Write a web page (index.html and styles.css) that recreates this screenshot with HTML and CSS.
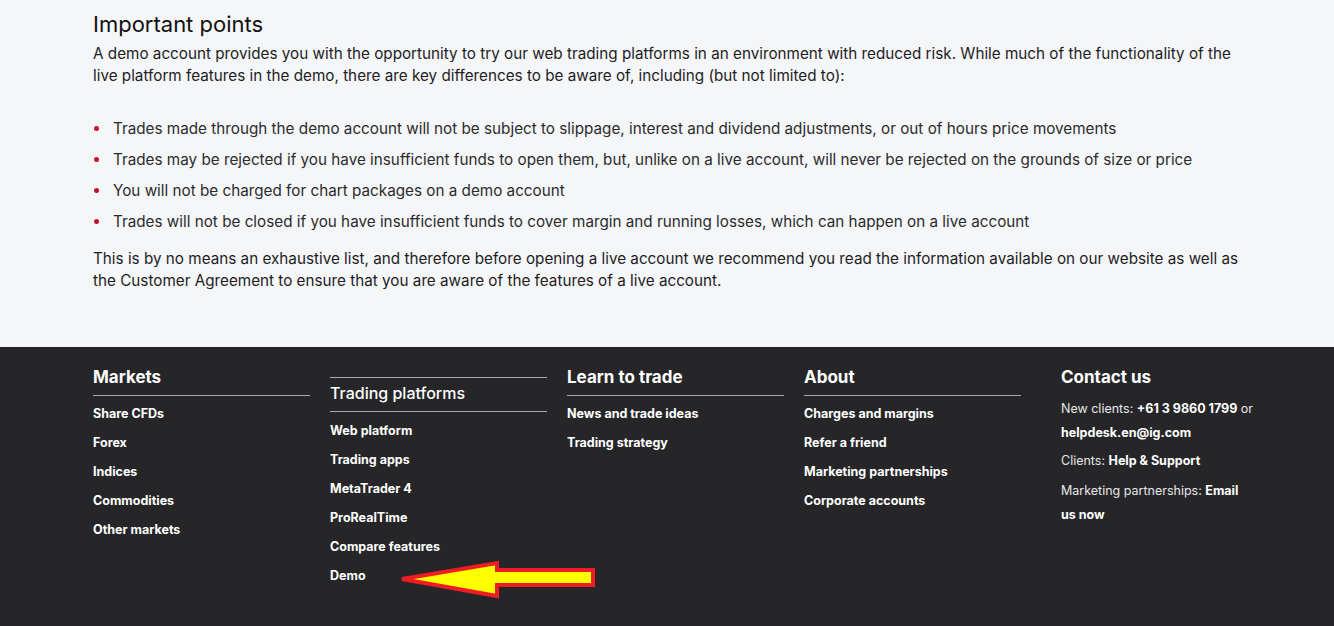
FILE: index.html
```html
<!DOCTYPE html>
<html lang="en">
<head>
<meta charset="utf-8">
<title>Demo account</title>
<link rel="stylesheet" href="styles.css">
</head>
<body>
<main class="main">
  <h2 class="title">Important points</h2>
  <p class="text">A demo account provides you with the opportunity to try our web trading platforms in an environment with reduced risk. While much of the functionality of the live platform features in the demo, there are key differences to be aware of, including (but not limited to):</p>
  <ul class="points">
    <li>Trades made through the demo account will not be subject to slippage, interest and dividend adjustments, or out of hours price movements</li>
    <li>Trades may be rejected if you have insufficient funds to open them, but, unlike on a live account, will never be rejected on the grounds of size or price</li>
    <li>You will not be charged for chart packages on a demo account</li>
    <li>Trades will not be closed if you have insufficient funds to cover margin and running losses, which can happen on a live account</li>
  </ul>
  <p class="text last">This is by no means an exhaustive list, and therefore before opening a live account we recommend you read the information available on our website as well as the Customer Agreement to ensure that you are aware of the features of a live account.</p>
</main>
<footer class="footer">
  <div class="col">
    <h3 class="col-head">Markets</h3>
    <ul class="links">
      <li>Share CFDs</li><li>Forex</li><li>Indices</li><li>Commodities</li><li>Other markets</li>
    </ul>
  </div>
  <div class="col col-offset">
    <h3 class="col-head col-head-light">Trading platforms</h3>
    <ul class="links links-offset">
      <li>Web platform</li><li>Trading apps</li><li>MetaTrader 4</li><li>ProRealTime</li><li>Compare features</li><li class="demo">Demo
        <svg class="arrow" width="200" height="44" viewBox="0 0 200 44">
          <polygon points="4,22 99,6 99,13 195,13 195,28 99,28 99,39" fill="#ffff00" stroke="#ee1c24" stroke-width="4" stroke-linejoin="miter"/>
        </svg>
      </li>
    </ul>
  </div>
  <div class="col">
    <h3 class="col-head">Learn to trade</h3>
    <ul class="links">
      <li>News and trade ideas</li><li>Trading strategy</li>
    </ul>
  </div>
  <div class="col">
    <h3 class="col-head">About</h3>
    <ul class="links">
      <li>Charges and margins</li><li>Refer a friend</li><li>Marketing partnerships</li><li>Corporate accounts</li>
    </ul>
  </div>
  <div class="col contact">
    <h3 class="contact-head">Contact us</h3>
    <p class="info">New clients: <b>+61 3 9860 1799</b> or <b>helpdesk.en@ig.com</b></p>
    <p class="info">Clients: <b>Help &amp; Support</b></p>
    <p class="info info-last">Marketing partnerships: <b>Email us now</b></p>
  </div>
</footer>
</body>
</html>
```

FILE: styles.css
```css
* { box-sizing: border-box; }
body {
  margin: 0;
  background: #f5f6f8;
  font-family: Inter, "Noto Sans", sans-serif;
  color: #1d1d1f;
}
.main {
  padding: 10px 80px 55px 93px;
}
.title {
  margin: 0 0 5px;
  font-size: 22px;
  line-height: 28px;
  font-weight: 400;
  color: #111;
}
.text {
  margin: 0;
  font-size: 15.25px;
  line-height: 22px;
  color: #1d1d1f;
}
.text.last { margin-top: 15px; }
.points {
  list-style: none;
  margin: 31px 0 0;
  padding: 0 0 0 20px;
}
.points li {
  position: relative;
  font-size: 15.25px;
  line-height: 22px;
  color: #2b2b2e;
  margin-bottom: 9px;
}
.points li:last-child { margin-bottom: 0; }
.points li::before {
  content: "";
  position: absolute;
  left: -19px;
  top: 8px;
  width: 5px;
  height: 5px;
  border-radius: 50%;
  background: #c8102e;
}
.footer {
  background: #262628;
  color: #fff;
  display: flex;
  gap: 20px;
  padding: 19px 40px 30px 93px;
  min-height: 290px;
}
.col { width: 217px; flex-shrink: 0; }
.col-head {
  margin: 0;
  font-size: 17px;
  line-height: 22px;
  font-weight: 700;
  padding-bottom: 7px;
  border-bottom: 1px solid #a9a9ad;
}
.col-head-light {
  font-size: 16px;
  font-weight: 500;
}
.col-offset {
  margin-top: 11px;
  border-top: 1px solid #a9a9ad;
  padding-top: 4px;
}
.links {
  list-style: none;
  margin: 0;
  padding: 9px 0 0;
}
.links-offset { padding-top: 10px; }
.links li {
  font-size: 12.5px;
  line-height: 17px;
  font-weight: 700;
  margin-bottom: 12px;
}
.demo { position: relative; }
.arrow {
  position: absolute;
  left: 68px;
  top: -10px;
}
.contact {
  margin-left: 20px;
  width: 195px;
}
.contact-head {
  margin: 0 0 9px;
  font-size: 17px;
  line-height: 22px;
  font-weight: 700;
}
.info {
  margin: 0 0 4px;
  font-size: 12.5px;
  line-height: 24px;
  color: #e6e6e8;
}
.info-last { margin-top: 6px; }
.info b { color: #fff; font-weight: 700; }
```
